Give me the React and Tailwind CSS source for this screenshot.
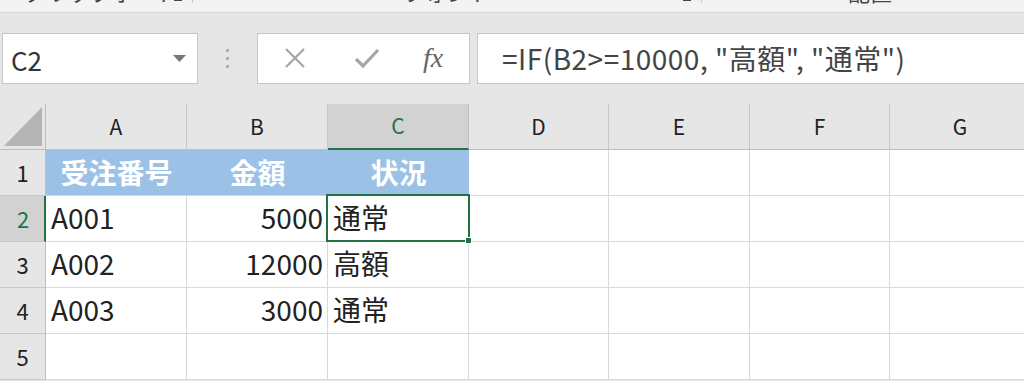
import { useState } from 'react';

const cols = ['A', 'B', 'C', 'D', 'E', 'F', 'G'];

const rows = [
    { n: 1, cells: ['受注番号', '金額', '状況'], head: true },
    { n: 2, cells: ['A001', '5000', '通常'] },
    { n: 3, cells: ['A002', '12000', '高額'] },
    { n: 4, cells: ['A003', '3000', '通常'] },
    { n: 5, cells: ['', '', ''] },
];

function App() {
    const [selected] = useState({ col: 'C', row: 2 });

    return (
        <div
            className="w-[1024px] h-[381px] overflow-hidden bg-[#e6e6e6] text-[#222]"
            style={{ fontFamily: '"Noto Sans CJK JP", "Noto Sans", sans-serif' }}
        >
            {/* ribbon group labels, cut off at the top */}
            <div className="h-[13px] overflow-hidden bg-[#f3f3f3] border-b border-[#d4d4d4]">
                <div className="flex items-end h-[13px] -mt-[10px] text-[22px] leading-[23px] text-[#444] whitespace-nowrap">
                    <span className="ml-[24px] w-[150px]">クリップボード</span>
                    <span className="w-[8px] h-[8px] border-b-2 border-r-2 border-[#444] mb-[2px]"></span>
                    <span className="ml-[10px] w-px h-[20px] bg-[#c8c8c8]"></span>
                    <span className="ml-[210px] w-[280px]">フォント</span>
                    <span className="w-[8px] h-[8px] border-b-2 border-r-2 border-[#444] mb-[2px]"></span>
                    <span className="ml-[10px] w-px h-[20px] bg-[#c8c8c8]"></span>
                    <span className="ml-[146px]">配置</span>
                </div>
            </div>

            {/* formula bar */}
            <div className="flex items-center h-[91px] pb-[1px]">
                <div className="ml-[2px] w-[196px] h-[51px] bg-white border border-[#c6c6c6] flex items-center justify-between pl-[8px] pr-[11px]">
                    <span className="text-[26px] text-[#333] mt-[2px]">{selected.col}{selected.row}</span>
                    <svg width="13" height="7" viewBox="0 0 13 7">
                        <path d="M0 0h13L6.5 7z" fill="#777" />
                    </svg>
                </div>
                <div className="w-[59px] flex flex-col items-center gap-[5px]">
                    <span className="w-[3px] h-[3px] bg-[#b0b0b0]"></span>
                    <span className="w-[3px] h-[3px] bg-[#b0b0b0]"></span>
                    <span className="w-[3px] h-[3px] bg-[#b0b0b0]"></span>
                </div>
                <div className="w-[213px] h-[51px] bg-white border border-[#c6c6c6] flex items-center">
                    <svg className="ml-[26px]" width="22" height="22" viewBox="0 0 22 22">
                        <path d="M2 2L20 20M20 2L2 20" stroke="#a6a6a6" strokeWidth="2.2" />
                    </svg>
                    <svg className="ml-[48px]" width="26" height="22" viewBox="0 0 26 22">
                        <path d="M2 12L9 19L24 3" stroke="#a6a6a6" strokeWidth="3.2" fill="none" />
                    </svg>
                    <span
                        className="ml-[43px] text-[28px] italic text-[#666] leading-none"
                        style={{ fontFamily: '"Liberation Serif", "DejaVu Serif", serif' }}
                    >
                        fx
                    </span>
                </div>
                <div className="ml-[7px] flex-1 h-[51px] bg-white border border-[#c6c6c6] border-r-0 flex items-center pl-[24px]">
                    <span className="text-[28px] tracking-[0.5px] text-[#444] whitespace-nowrap">=IF(B2&gt;=10000, "高額", "通常")</span>
                </div>
            </div>

            {/* sheet */}
            <div className="grid grid-cols-[46px_141px_141px_141px_140px_141px_140px_141px] grid-rows-[46px_46px_46px_46px_46px_46px]">
                <div className="border-r border-b border-[#bdbdbd] flex items-end justify-end pr-[3px] pb-[3px]">
                    <svg width="38" height="39" viewBox="0 0 38 39">
                        <path d="M38 0V39H0z" fill="#b4b4b4" />
                    </svg>
                </div>
                {cols.map((c) =>
                    c === selected.col ? (
                        <div
                            key={c}
                            className="bg-[#d2d2d2] border-r border-[#bdbdbd] border-b-2 border-b-[#217346] flex items-center justify-center text-[21px] text-[#217346]"
                        >
                            {c}
                        </div>
                    ) : (
                        <div
                            key={c}
                            className="border-r border-b border-[#c8c8c8] border-b-[#bdbdbd] flex items-center justify-center text-[21px]"
                        >
                            {c}
                        </div>
                    )
                )}

                {rows.map((r) => (
                    <RowCells key={r.n} row={r} selected={selected} />
                ))}
            </div>
        </div>
    );
}

function RowCells({ row, selected }) {
    const isSelRow = row.n === selected.row;

    return (
        <>
            {isSelRow ? (
                <div className="bg-[#d2d2d2] border-r-2 border-r-[#217346] border-b border-[#c8c8c8] flex items-center justify-center text-[22px] text-[#217346] pl-[2px]">
                    {row.n}
                </div>
            ) : (
                <div className="border-r border-b border-[#c8c8c8] border-r-[#bdbdbd] flex items-center justify-center text-[22px]">
                    {row.n}
                </div>
            )}
            {cols.map((c, i) => {
                const value = row.cells[i] || '';
                const isSel = isSelRow && c === selected.col;

                if (row.head && i < 3) {
                    return (
                        <div
                            key={c}
                            className="bg-[#9bc2e6] border-b border-[#d4d4d4] flex items-center justify-center text-[28px] font-bold text-white pb-[2px]"
                        >
                            {value}
                        </div>
                    );
                }

                return (
                    <div
                        key={c}
                        className={
                            'relative bg-white border-r border-b border-[#d9d9d9] flex items-center text-[28px] text-[#222] pb-[3px] ' +
                            (i === 1 ? 'justify-end pr-[4px]' : 'justify-start pl-[5px]')
                        }
                    >
                        {value}
                        {isSel && (
                            <>
                                <div className="absolute z-10 -left-[2px] -top-[2px] -right-[2px] -bottom-[1px] border-2 border-[#217346]"></div>
                                <div className="absolute z-20 -right-[4px] -bottom-[3px] w-[7px] h-[7px] bg-[#217346] border border-white"></div>
                            </>
                        )}
                    </div>
                );
            })}
        </>
    );
}

export default App;
